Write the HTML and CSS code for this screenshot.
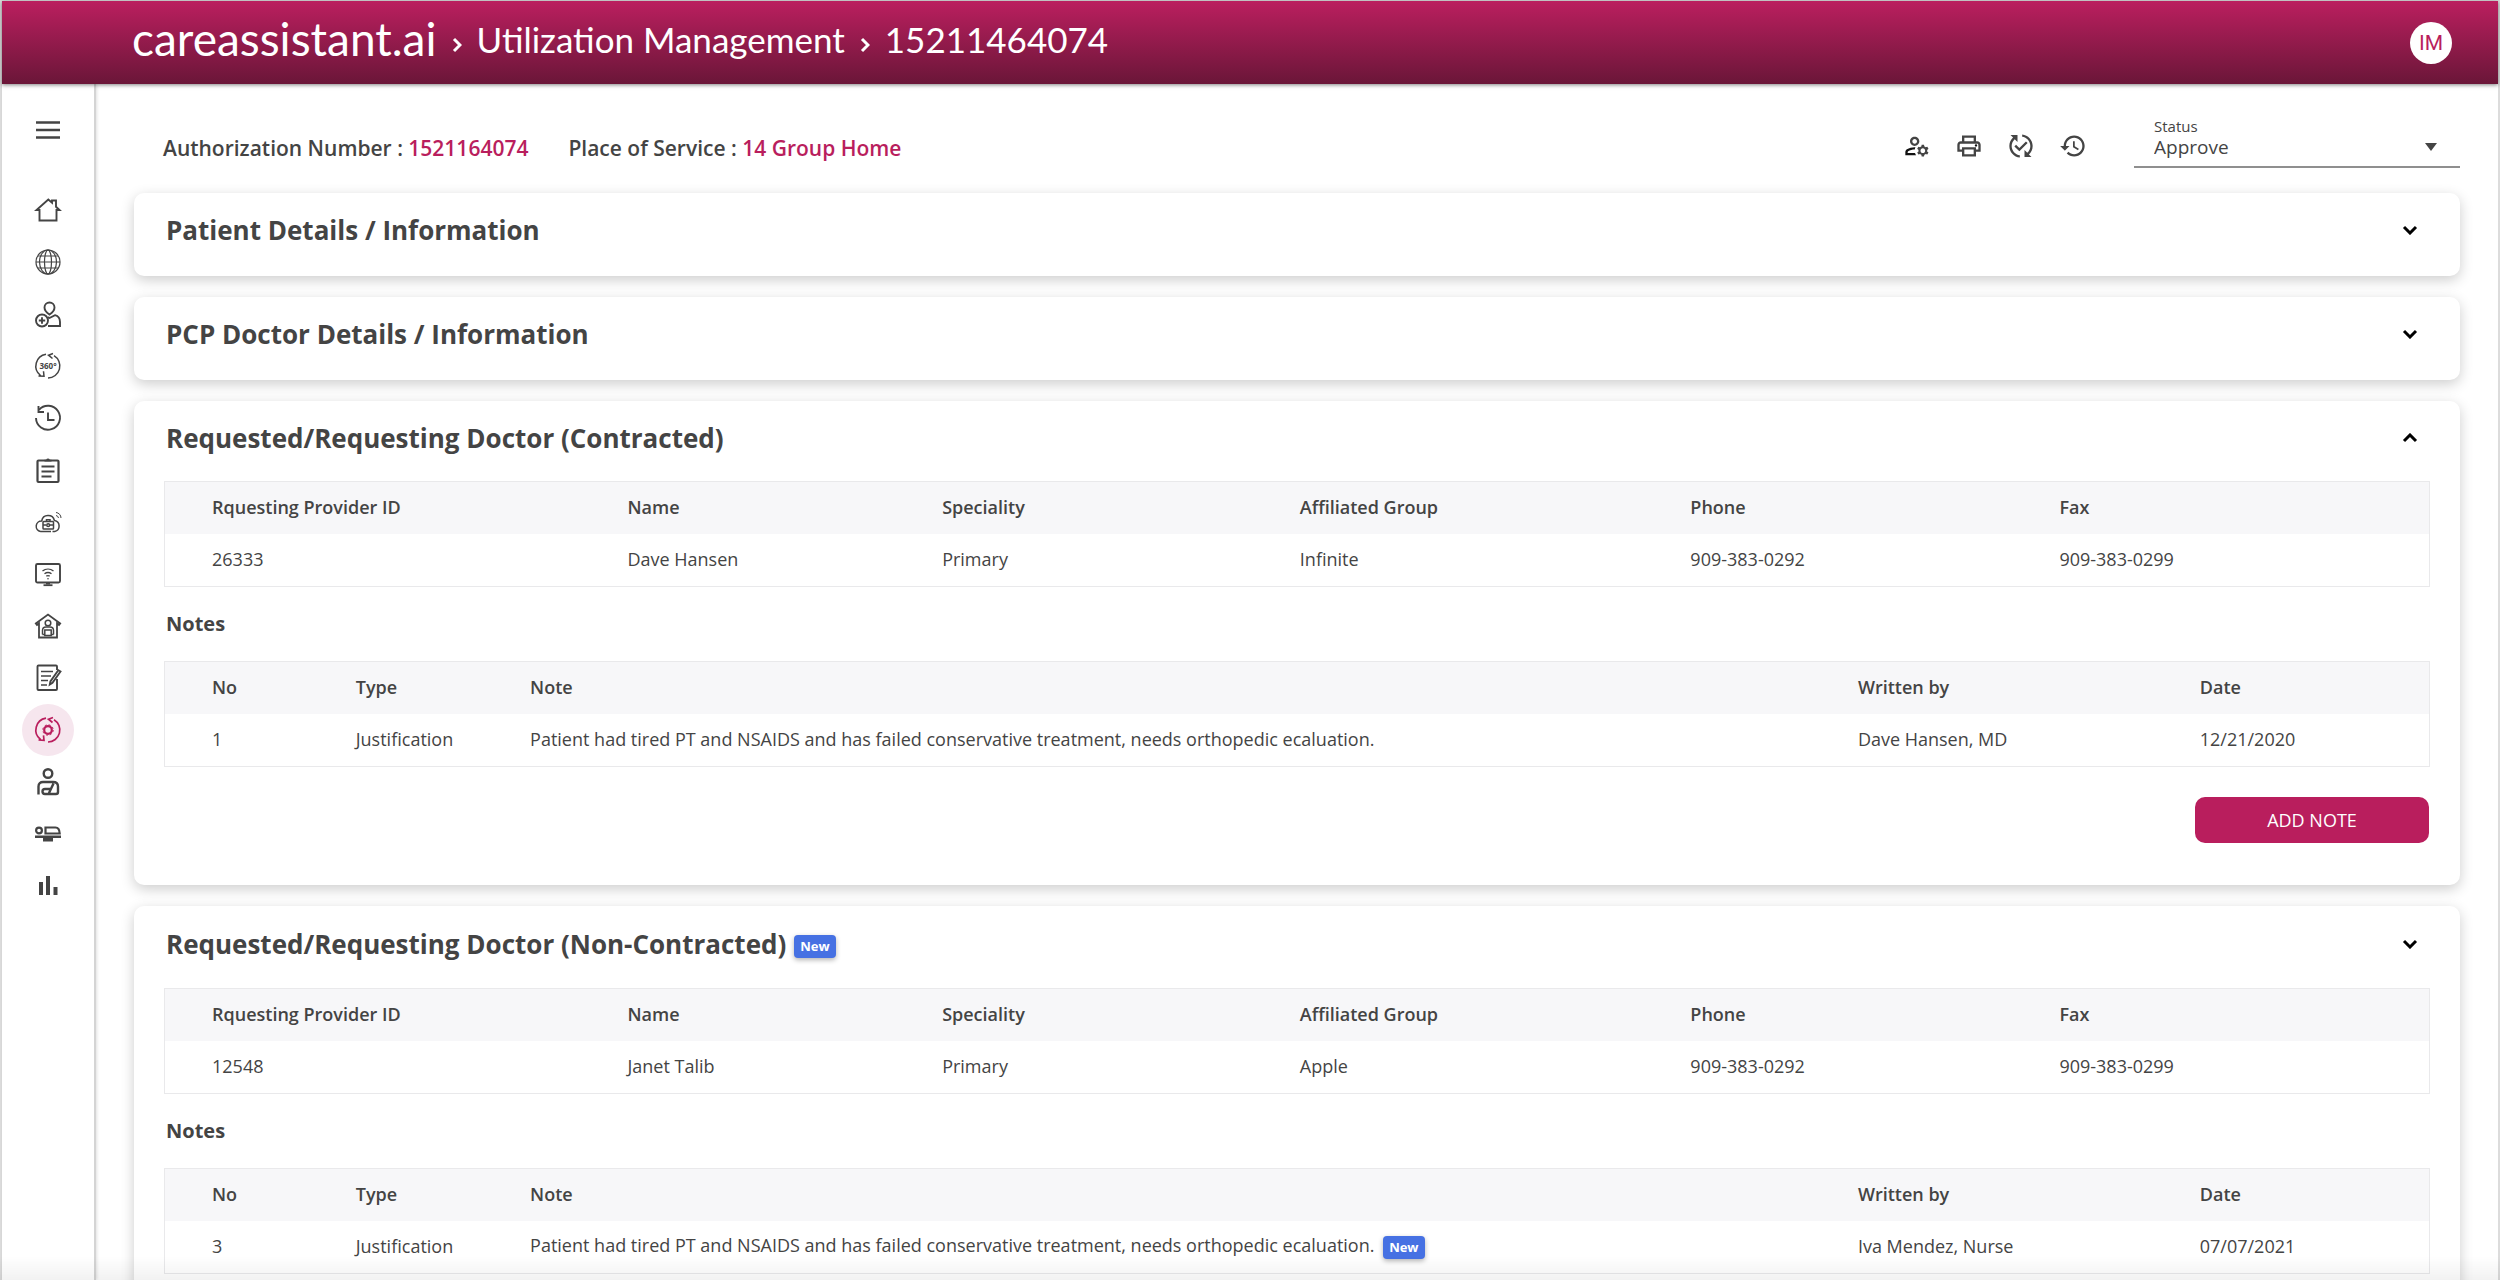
FILE: index.html
```html
<!DOCTYPE html>
<html lang="en">
<head>
<meta charset="utf-8">
<meta name="viewport" content="width=device-width, initial-scale=1">
<title>careassistant.ai - Utilization Management</title>
<link rel="stylesheet" href="styles.css">
</head>
<body>
<div class="app">
  <header class="topbar">
    <nav class="crumbs" aria-label="Breadcrumb">
      <a class="brand" href="#">careassistant.ai</a>
      <svg class="crumb-sep" viewBox="0 0 10 16" aria-hidden="true"><path d="M2 2l6 6-6 6"/></svg>
      <a class="crumb" href="#">Utilization Management</a>
      <svg class="crumb-sep" viewBox="0 0 10 16" aria-hidden="true"><path d="M2 2l6 6-6 6"/></svg>
      <span class="crumb">15211464074</span>
    </nav>
    <button class="avatar" type="button">IM</button>
  </header>

  <div class="body">
    <aside class="sidebar">
      <button class="nav-item menu" type="button" aria-label="Menu">
        <svg viewBox="0 0 26 26"><path d="M1 5.500h24M1 13h24M1 20.500h24" stroke-width="2.400"/></svg>
      </button>
      <nav class="nav" aria-label="Main">
        <a class="nav-item" href="#" aria-label="Home"><svg viewBox="0 0 26 26"><path d="M4.500 13v10.500h17V13h3L21 9.800V3.500h-4v2.200l-3.700-3.200L1.500 13h3z" stroke-width="1.900"/></svg></a>
        <a class="nav-item" href="#" aria-label="Network"><svg viewBox="0 0 26 26"><g stroke-width="1.200"><circle cx="13" cy="13" r="12"/><ellipse cx="13" cy="13" rx="8.500" ry="12"/><ellipse cx="13" cy="13" rx="3.500" ry="12"/><path d="M1 13h24M3 7h20M3 19h20"/></g></svg></a>
        <a class="nav-item" href="#" aria-label="Add member"><svg viewBox="0 0 26 26"><g stroke-width="1.900"><path d="M14.500 13.500c-3-2-5-4-5-7a5 5 0 0 1 10 0c0 3-2 5-5 7z"/><path d="M13 25h12v-4c0-3.500-2-6-5-6.800l-5.500 2.800-1.500-.8"/><circle cx="7" cy="19.500" r="6"/><path d="M7 16.300v6.400M3.800 19.500h6.400"/></g></svg></a>
        <a class="nav-item" href="#" aria-label="360 view"><svg viewBox="0 0 26 26"><g stroke-width="1.500"><path d="M11 1.200A12 12 0 0 0 5.500 22.500M13 25A12 12 0 0 0 19 2.700M17.500 5.500l-4-3.300L18 .5M3.500 23l5.500.3-.5-5"/></g><text x="13" y="16" class="nav-360">360°</text></svg></a>
        <a class="nav-item" href="#" aria-label="History"><svg viewBox="0 0 26 26"><g stroke-width="1.900"><path d="M1 13a12 12 0 1 0 3-8.200"/><path d="M3.500 1v6H9M13 7.500V15h6.500"/></g></svg></a>
        <a class="nav-item" href="#" aria-label="Orders"><svg viewBox="0 0 26 26"><rect x="2.500" y="3.500" width="21" height="21.500" rx="1" stroke-width="2.200"/><path d="M6.500 9.500h13M6.500 14.500h13M6.500 19.500h10" stroke-width="1.800"/><path d="M9.500 4.500V2.800h1.700a1.900 1.900 0 0 1 3.600 0h1.700v1.700z" class="solid"/></svg></a>
        <a class="nav-item" href="#" aria-label="Remote care"><svg viewBox="0 0 26 26"><g stroke-width="1.500"><path d="M5.500 22.500a5.300 5.300 0 0 1 1.200-10.500 6.500 6.500 0 0 1 12.700-.5 5.600 5.600 0 0 1 .3 11h-2.200M5.500 22.500H16"/><rect x="8" y="12.500" width="10.500" height="7.500" rx=".8" /><path d="M11.500 12.500v-1.700h3.500v1.700M8 16h3.400M15 16h3.500"/><circle cx="13.200" cy="16.200" r="1.400"/><path d="M21 6.500a3 3 0 0 1 2.500 2.500M21 3.500a5.500 5.500 0 0 1 5 5.500" stroke-width="1"/></g></svg></a>
        <a class="nav-item" href="#" aria-label="Telehealth"><svg viewBox="0 0 26 26"><rect x="1" y="3" width="24" height="18.500" rx="1.500" stroke-width="1.900"/><path d="M8.500 24.200h9" stroke-width="1.800"/><path d="M11 21.500h4v2h-4z" class="solid"/><path d="M7.500 10a9 9 0 0 1 11 0M9.500 12.800a6 6 0 0 1 7 0M11.300 15.200a3 3 0 0 1 3.400 0" stroke-width="1.400"/><circle cx="13" cy="17.800" r=".8" class="solid"/></svg></a>
        <a class="nav-item" href="#" aria-label="Home care"><svg viewBox="0 0 26 26"><path d="M4 10.500V24.500h18V10.500l2 1.500 1.200-1.600L13 1.500.8 10.400 2 12z" stroke-width="1.800"/><circle cx="13" cy="10" r="2.800" stroke-width="1.500"/><path d="M7.500 21.500v-4c0-2 1.500-3.500 3.500-3.500h4c2 0 3.500 1.500 3.500 3.500v4M9.800 17h6.400v5.500H9.800zM7.500 21.500h2M16.500 21.500h2" stroke-width="1.500"/></svg></a>
        <a class="nav-item" href="#" aria-label="Notes"><svg viewBox="0 0 26 26"><path d="M22 14v10a1 1 0 0 1-1 1H3.500a1 1 0 0 1-1-1V1.500a1 1 0 0 1 1-1H21a1 1 0 0 1 1 1v3.500" stroke-width="1.900"/><path d="M6 6.500h12M6 11h10M6 15.500h7M6 20h6" stroke-width="1.700"/><path d="M25.500 6.500L17.500 17.800l-2.700 1.700.6-3.100 7.900-11.200z" stroke-width="1.900"/></svg></a>
        <a class="nav-item active" href="#" aria-current="page" aria-label="Utilization management"><svg viewBox="0 0 26 26"><g stroke-width="1.700"><path d="M11 1.200A12 12 0 0 0 5.500 22.500M13 25A12 12 0 0 0 19 2.700M17.500 5.500l-4-3.300L18 .5M3.500 23l5.500.3-.5-5"/><circle cx="13" cy="13" r="3.800" stroke-width="2.200"/><circle cx="13" cy="13" r="5.200" stroke-width="1" stroke-dasharray="2 2.084"/></g></svg></a>
        <a class="nav-item" href="#" aria-label="Patients"><svg viewBox="0 0 26 26"><g stroke-width="2.400"><circle cx="13" cy="4.500" r="4.300"/><path d="M3.500 25.500v-8c0-3 2-4.500 4.500-4.500h10c3 0 5 1.800 5 4.500v5.500c0 1.200-.8 2-2 2h-11a2.500 2.500 0 0 1 0-5h5.500M18.500 14.500L14 24"/></g></svg></a>
        <a class="nav-item" href="#" aria-label="Inpatient"><svg viewBox="0 0 26 26"><circle cx="4" cy="9.500" r="2.900" stroke-width="2.200"/><path d="M10.500 6.500h10c2.500 0 4 2 4.200 6H10.500z" stroke-width="2.200"/><path d="M0 14.500h26v2.500H0zM8 17h10v3.500H8z" class="solid"/></svg></a>
        <a class="nav-item" href="#" aria-label="Reports"><svg viewBox="0 0 26 26"><path d="M4 9h4v13H4zM11 3h4v19h-4zM18.500 14h4v8h-4z" class="solid"/></svg></a>
      </nav>
    </aside>

    <main class="content">
      <div class="summary">
        <p class="fact">Authorization Number : <span class="value">1521164074</span></p>
        <p class="fact">Place of Service : <span class="value">14 Group Home</span></p>
        <div class="actions">
          <button type="button" aria-label="Manage account"><svg viewBox="0 0 24 24"><path d="M4 18v-.65c0-.34.16-.66.41-.81C6.100 15.530 8.030 15 10 15c.03 0 .05 0 .08.01.1-.7.3-1.370.59-1.980-.22-.02-.44-.03-.67-.03-2.420 0-4.680.67-6.610 1.820-.88.52-1.390 1.500-1.390 2.530V20h9.260c-.42-.6-.75-1.280-.97-2H4z" class="ink"/><path d="M10 12c2.210 0 4-1.790 4-4s-1.790-4-4-4-4 1.790-4 4 1.790 4 4 4zm0-6c1.100 0 2 .9 2 2s-.9 2-2 2-2-.9-2-2 .9-2 2-2zM20.750 16c0-.22-.03-.42-.06-.63l1.140-1.010-1-1.730-1.450.49c-.32-.27-.68-.48-1.080-.63L18 11h-2l-.3 1.490c-.4.15-.76.36-1.080.63l-1.450-.49-1 1.730 1.140 1.010c-.03.21-.06.41-.06.63s.03.42.06.63l-1.140 1.010 1 1.730 1.450-.49c.32.27.68.48 1.080.63L16 21h2l.3-1.490c.4-.15.76-.36 1.080-.63l1.450.49 1-1.730-1.140-1.010c.03-.21.06-.41.06-.63zM17 18c-1.100 0-2-.9-2-2s.9-2 2-2 2 .9 2 2-.9 2-2 2z"/></svg></button>
          <button type="button" aria-label="Print"><svg viewBox="0 0 24 24"><path d="M19 8h-1V3H6v5H5c-1.660 0-3 1.340-3 3v6h4v4h12v-4h4v-6c0-1.660-1.340-3-3-3zM8 5h8v3H8V5zm8 12v2H8v-4h8v2zm2-2v-2H6v2H4v-4c0-.55.45-1 1-1h14c.55 0 1 .45 1 1v4h-2z"/><circle cx="18" cy="11.500" r="1" class="ink"/></svg></button>
          <button type="button" aria-label="Publish changes"><svg viewBox="0 0 24 24"><path d="M17.660 9.530l-7.070 7.070-4.240-4.240 1.410-1.410 2.830 2.830 5.660-5.660 1.410 1.410zM4 12c0-2.330 1.020-4.420 2.620-5.880L9 8.500v-6H3l2.200 2.200C3.240 6.520 2 9.110 2 12c0 5.190 3.950 9.450 9 9.950v-2.020C7.060 19.440 4 16.070 4 12zM22 12c0-5.190-3.950-9.450-9-9.950v2.020c3.940.49 7 3.860 7 7.930 0 2.330-1.020 4.420-2.620 5.880L15 15.500v6h6l-2.200-2.200C20.760 17.480 22 14.890 22 12z"/></svg></button>
          <button type="button" aria-label="History"><svg viewBox="0 0 24 24"><path d="M13 3c-4.970 0-9 4.030-9 9H1l3.890 3.890.07.14L9 12H6c0-3.870 3.130-7 7-7s7 3.130 7 7-3.130 7-7 7c-1.930 0-3.680-.79-4.940-2.060l-1.420 1.420C8.270 19.990 10.510 21 13 21c4.970 0 9-4.030 9-9s-4.030-9-9-9zm-1 5v5l4.280 2.540.72-1.210-3.500-2.080V8H12z"/></svg></button>
        </div>
        <div class="status">
          <label for="status">Status</label>
          <select id="status"><option>Approve</option><option>Deny</option></select>
          <svg class="caret" viewBox="0 0 12 8" aria-hidden="true"><path d="M0 0h12L6 8z"/></svg>
        </div>
      </div>

      <section class="card closed">
        <div class="card-head">
          <h2>Patient Details / Information</h2>
          <button class="toggle" type="button" aria-label="Expand"><svg viewBox="0 0 16 10"><path d="M2 2l6 6 6-6"/></svg></button>
        </div>
      </section>

      <section class="card closed">
        <div class="card-head">
          <h2>PCP Doctor Details / Information</h2>
          <button class="toggle" type="button" aria-label="Expand"><svg viewBox="0 0 16 10"><path d="M2 2l6 6 6-6"/></svg></button>
        </div>
      </section>

      <section class="card">
        <div class="card-head">
          <h2>Requested/Requesting Doctor (Contracted)</h2>
          <button class="toggle" type="button" aria-label="Collapse"><svg viewBox="0 0 16 10"><path d="M2 8l6-6 6 6"/></svg></button>
        </div>
        <div class="card-body">
          <table class="providers">
            <thead><tr><th>Rquesting Provider ID</th><th>Name</th><th>Speciality</th><th>Affiliated Group</th><th>Phone</th><th>Fax</th></tr></thead>
            <tbody><tr><td>26333</td><td>Dave Hansen</td><td>Primary</td><td>Infinite</td><td>909-383-0292</td><td>909-383-0299</td></tr></tbody>
          </table>
          <h3>Notes</h3>
          <table class="notes">
            <thead><tr><th>No</th><th>Type</th><th>Note</th><th>Written by</th><th>Date</th></tr></thead>
            <tbody><tr><td>1</td><td>Justification</td><td>Patient had tired PT and NSAIDS and has failed conservative treatment, needs orthopedic ecaluation.</td><td>Dave Hansen, MD</td><td>12/21/2020</td></tr></tbody>
          </table>
          <button class="add-note" type="button">ADD NOTE</button>
        </div>
      </section>

      <section class="card">
        <div class="card-head flagged">
          <h2>Requested/Requesting Doctor (Non-Contracted)</h2>
          <span class="badge">New</span>
          <button class="toggle" type="button" aria-label="Expand"><svg viewBox="0 0 16 10"><path d="M2 2l6 6 6-6"/></svg></button>
        </div>
        <div class="card-body">
          <table class="providers">
            <thead><tr><th>Rquesting Provider ID</th><th>Name</th><th>Speciality</th><th>Affiliated Group</th><th>Phone</th><th>Fax</th></tr></thead>
            <tbody><tr><td>12548</td><td>Janet Talib</td><td>Primary</td><td>Apple</td><td>909-383-0292</td><td>909-383-0299</td></tr></tbody>
          </table>
          <h3>Notes</h3>
          <table class="notes">
            <thead><tr><th>No</th><th>Type</th><th>Note</th><th>Written by</th><th>Date</th></tr></thead>
            <tbody><tr><td>3</td><td>Justification</td><td>Patient had tired PT and NSAIDS and has failed conservative treatment, needs orthopedic ecaluation. <span class="badge">New</span></td><td>Iva Mendez, Nurse</td><td>07/07/2021</td></tr></tbody>
          </table>
        </div>
      </section>
    </main>
  </div>
</div>
</body>
</html>
```

FILE: styles.css
```css
* { box-sizing: border-box; }

:root {
  --brand: #b91e5d;
  --text: #444;
  --line: #e9e9eb;
}

body {
  margin: 0;
  background: #fff;
  color: var(--text);
  font-family: "Open Sans", "Noto Sans", sans-serif;
  font-size: 18px;
}

button, select { font: inherit; color: inherit; }
button { padding: 0; border: 0; background: none; cursor: pointer; }
a { color: inherit; text-decoration: none; }
h2, h3, p { margin: 0; }

.app {
  display: flex;
  flex-direction: column;
  height: 100vh;
  border: solid #dcdcdc;
  border-width: 1px 2px 0;
}

.app::after {
  content: "";
  position: fixed;
  inset: auto 0 0;
  height: 24px;
  background: linear-gradient(transparent, rgba(0, 0, 0, .05));
  pointer-events: none;
}

/* Top bar */
.topbar {
  display: flex;
  flex: none;
  align-items: center;
  justify-content: space-between;
  height: 83px;
  padding: 0 46px 0 130px;
  background: linear-gradient(#bb1f5f, #6a1638);
  box-shadow: 0 1px 4px rgba(0, 0, 0, .5);
  color: #fff;
  font-family: Lato, sans-serif;
  z-index: 1;
}

.crumbs { display: flex; align-items: center; gap: 15px; padding-bottom: 8px; line-height: 48px; }
.brand { font-size: 46px; }
.crumb { font-size: 35px; }
.crumb-sep { width: 10px; height: 16px; margin-top: 12px; fill: none; stroke: #fff; stroke-width: 3; }

.avatar {
  width: 42px;
  height: 42px;
  border-radius: 50%;
  background: #fff;
  color: var(--brand);
  font-family: Roboto, sans-serif;
  font-size: 21px;
}

/* Sidebar */
.body { display: flex; flex: 1; min-height: 0; }

.sidebar {
  flex: none;
  width: 94px;
  padding-top: 20px;
  border-right: 2px solid #d4d4d4;
  box-shadow: 1px 0 3px rgba(0, 0, 0, .12);
}

.nav { display: flex; flex-direction: column; }

.nav-item {
  display: flex;
  align-items: center;
  justify-content: center;
  width: 52px;
  height: 52px;
  margin: 0 auto;
  border-radius: 50%;
  color: #444;
}

.nav-item.menu { margin-bottom: 28px; }
.nav-item.active { background: #f6e6ee; color: var(--brand); }
.nav-item svg { width: 26px; height: 26px; overflow: visible; fill: none; stroke: currentColor; }
.nav-item .solid { fill: currentColor; stroke: none; }
.nav-360 { fill: currentColor; stroke: none; font-size: 8px; font-weight: 700; text-anchor: middle; }

/* Content */
.content {
  display: flex;
  flex: 1;
  flex-direction: column;
  gap: 21px;
  min-width: 0;
  padding: 24px 38px 40px 38px;
  overflow: hidden;
}

.summary {
  display: flex;
  align-items: center;
  gap: 40px;
  margin-bottom: 4px;
  padding-left: 29px;
}

.fact { padding-top: 20px; font-size: 21px; font-weight: 600; line-height: 40px; }
.value { color: var(--brand); }

.actions { display: flex; gap: 24px; margin: 0 7px 0 auto; padding-top: 16px; }
.actions button { width: 28px; height: 28px; }
.actions svg { display: block; width: 28px; height: 28px; fill: #444; }
.actions .ink { fill: #111; }

.status {
  display: grid;
  align-content: start;
  width: 326px;
  height: 59px;
  padding: 8px 20px 0;
  border-bottom: 2px solid #8f8f8f;
}

.status label { grid-area: 1 / 1; font-size: 15px; line-height: 18px; }

.status select {
  grid-area: 2 / 1;
  height: 24px;
  padding: 0;
  border: 0;
  background: none;
  font-size: 19px;
  line-height: 24px;
  appearance: none;
}

.caret { grid-area: 2 / 1; place-self: center end; width: 12px; height: 8px; margin-right: 3px; fill: #444; pointer-events: none; }

/* Cards */
.card {
  flex: none;
  padding: 0 30px;
  border-radius: 10px;
  background: #fff;
  box-shadow: 0 4px 14px rgba(0, 0, 0, .2);
}

.card.closed { padding-bottom: 9px; }
.card-head { display: flex; align-items: center; height: 74px; gap: 8px; }
.card-head.flagged { height: 76px; }
.card-head .badge { margin-top: 5px; }
.card-head h2 { padding-left: 2px; font-size: 26px; font-weight: 700; line-height: 36px; }
.card-body { display: flex; flex-direction: column; padding: 6px 0 42px; }

.toggle { display: grid; place-items: center; width: 40px; height: 40px; margin-left: auto; }
.toggle svg { width: 16px; height: 10px; fill: none; stroke: #000; stroke-width: 3; }

h3 { padding-left: 2px; font-size: 20px; font-weight: 700; line-height: 74px; }

.badge {
  display: inline-block;
  padding: 0 6px;
  border-radius: 4px;
  background: #4671e3;
  box-shadow: 0 2px 5px rgba(0, 0, 0, .3);
  color: #fff;
  font-size: 13px;
  font-weight: 700;
  line-height: 23px;
}

td .badge { margin-left: 4px; vertical-align: middle; }

/* Tables */
table { width: 100%; border: 1px solid var(--line); border-spacing: 0; table-layout: fixed; }
th, td { height: 52px; padding: 0 0 2px 47px; text-align: left; font-size: 18px; line-height: 24px; white-space: nowrap; }
th { background: #f7f7f9; font-weight: 600; }

.providers th:nth-child(1) { width: 18.35%; }
.providers th:nth-child(2) { width: 13.9%; }
.providers th:nth-child(3) { width: 15.8%; }
.providers th:nth-child(4) { width: 17.25%; }
.providers th:nth-child(5) { width: 16.3%; }

.notes th:nth-child(1) { width: 6.35%; }
.notes th:nth-child(2) { width: 7.7%; }
.notes th:nth-child(3) { width: 58.65%; }
.notes th:nth-child(4) { width: 15.1%; }

.add-note {
  align-self: flex-end;
  width: 234px;
  height: 46px;
  margin: 30px 1px 0 0;
  border-radius: 10px;
  background: var(--brand);
  color: #fff;
  font-size: 18px;
}
```
